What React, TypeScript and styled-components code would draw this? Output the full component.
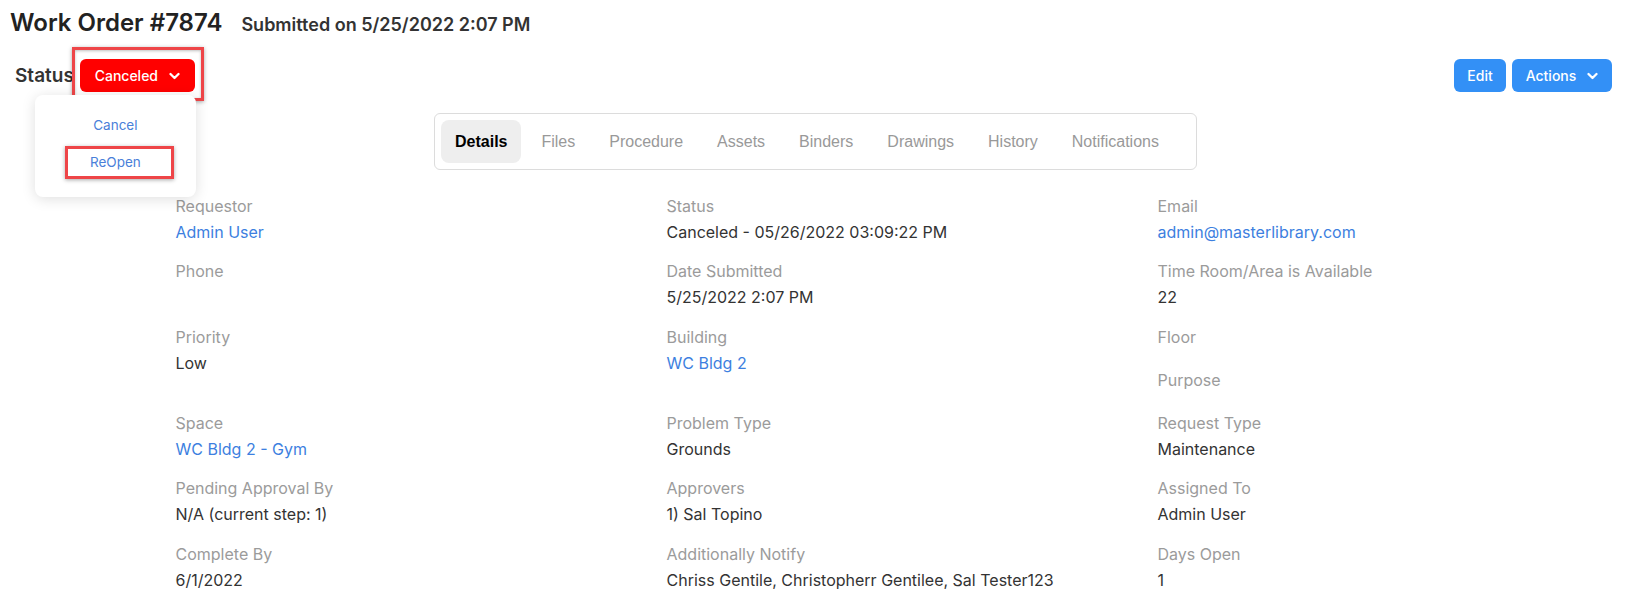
import React from "react";
import styled, { createGlobalStyle } from "styled-components";

const GlobalStyle = createGlobalStyle`
  body {
    margin: 0;
    background: #fff;
    font-family: Inter, "Noto Sans", sans-serif;
    color: #333;
  }
`;

const Page = styled.div`
  padding: 8px 14px 0 10px;
  height: 610px;
  box-sizing: border-box;
  overflow: hidden;
`;

const Header = styled.div`
  display: flex;
  align-items: baseline;
  gap: 19px;
  height: 30px;
  line-height: 30px;
`;

const Title = styled.h1`
  margin: 0;
  font-size: 24px;
  font-weight: 600;
  color: #222;
`;

const Submitted = styled.span`
  font-size: 18px;
  font-weight: 600;
  color: #333;
`;

const Toolbar = styled.div`
  display: flex;
  justify-content: space-between;
  align-items: center;
  margin-top: 21px;
  padding-left: 5px;
`;

const StatusGroup = styled.div`
  display: flex;
  align-items: center;
  gap: 6px;
`;

const StatusLabel = styled.span`
  font-size: 19px;
  font-weight: 600;
  color: #333;
`;

const DropdownWrap = styled.div`
  position: relative;
`;

const Button = styled.button<{ $tone: "red" | "blue" }>`
  display: inline-flex;
  align-items: center;
  justify-content: center;
  gap: 11px;
  height: 33px;
  padding: 0 14px;
  border: none;
  border-radius: 6px;
  font-family: Inter, "Noto Sans", sans-serif;
  font-size: 14px;
  font-weight: 500;
  color: #fff;
  background: ${(p) => (p.$tone === "red" ? "#ff0000" : "#3390f6")};
  cursor: pointer;
`;

const StatusButton = styled(Button)`
  position: relative;
  width: 115px;

  &::after {
    content: "";
    position: absolute;
    inset: -12px -9px -9px -8px;
    border: 3px solid #ee4548;
    box-shadow: 0 1px 4px rgba(0, 0, 0, 0.35), inset 0 1px 3px rgba(0, 0, 0, 0.25);
    pointer-events: none;
  }
`;

const Menu = styled.div`
  position: absolute;
  top: 36px;
  left: -45px;
  width: 161px;
  padding: 12px 0 16px;
  background: #fff;
  border-radius: 8px;
  box-shadow: 0 2px 14px rgba(0, 0, 0, 0.13);
  z-index: 2;
`;

const MenuItem = styled.div<{ $marked?: boolean }>`
  position: relative;
  height: 37px;
  line-height: 37px;
  text-align: center;
  font-size: 13.5px;
  color: #4a80d9;

  ${(p) =>
    p.$marked &&
    `
    &::after {
      content: "";
      position: absolute;
      inset: 2px 22px 2px 30px;
      border: 3px solid #ee4548;
      box-shadow: 0 1px 4px rgba(0, 0, 0, 0.35);
      pointer-events: none;
    }
  `}
`;

const Actions = styled.div`
  display: flex;
  gap: 6px;
`;

const EditButton = styled(Button)`
  width: 52px;
  padding: 0;
`;

const ActionsButton = styled(Button)`
  width: 100px;
  padding: 0;
`;

const Tabs = styled.div`
  display: inline-flex;
  gap: 6px;
  margin: 21px 0 0 424px;
  padding: 6px 23px 6px 6px;
  border: 1px solid #dcdcdc;
  border-radius: 6px;
`;

const Tab = styled.div<{ $active?: boolean }>`
  height: 43px;
  line-height: 43px;
  padding: 0 14px;
  border-radius: 8px;
  font-family: "Liberation Sans", Arial, sans-serif;
  font-size: 16px;
  font-weight: ${(p) => (p.$active ? 700 : 400)};
  color: ${(p) => (p.$active ? "#000" : "#999")};
  background: ${(p) => (p.$active ? "#eeeeee" : "transparent")};
`;

const Details = styled.div`
  display: grid;
  grid-template-columns: repeat(3, 491px);
  margin-top: 23.5px;
  padding-left: 165.5px;
`;

const Cell = styled.div`
  display: flex;
  flex-direction: column;
`;

const Field = styled.div`
  padding-bottom: 15.5px;
`;

const Label = styled.div`
  font-size: 16px;
  line-height: 24px;
  color: #9b9b9b;
`;

const Value = styled.div<{ $link?: boolean }>`
  margin-top: 2px;
  font-size: 16px;
  line-height: 24px;
  color: ${(p) => (p.$link ? "#3d7fe0" : "#333")};
  &:empty {
    height: 0;
    margin-top: 3.5px;
  }
`;

const Chevron = () => (
  <svg width="11" height="8" viewBox="0 0 11 8" fill="none">
    <path d="M1.5 2 L5.5 6 L9.5 2" stroke="#fff" strokeWidth="2.3" strokeLinecap="round" strokeLinejoin="round" />
  </svg>
);

type Item = { label: string; value?: string; link?: boolean };

const cells: Item[][] = [
  [{ label: "Requestor", value: "Admin User", link: true }],
  [{ label: "Status", value: "Canceled - 05/26/2022 03:09:22 PM" }],
  [{ label: "Email", value: "admin@masterlibrary.com", link: true }],
  [{ label: "Phone", value: "" }],
  [{ label: "Date Submitted", value: "5/25/2022 2:07 PM" }],
  [{ label: "Time Room/Area is Available", value: "22" }],
  [{ label: "Priority", value: "Low" }],
  [{ label: "Building", value: "WC Bldg 2", link: true }],
  [{ label: "Floor", value: "" }, { label: "Purpose", value: "" }],
  [{ label: "Space", value: "WC Bldg 2 - Gym", link: true }],
  [{ label: "Problem Type", value: "Grounds" }],
  [{ label: "Request Type", value: "Maintenance" }],
  [{ label: "Pending Approval By", value: "N/A (current step: 1)" }],
  [{ label: "Approvers", value: "1) Sal Topino" }],
  [{ label: "Assigned To", value: "Admin User" }],
  [{ label: "Complete By", value: "6/1/2022" }],
  [{ label: "Additionally Notify", value: "Chriss Gentile, Christopherr Gentilee, Sal Tester123" }],
  [{ label: "Days Open", value: "1" }],
];

const tabs = ["Details", "Files", "Procedure", "Assets", "Binders", "Drawings", "History", "Notifications"];

export default function App() {
  return (
    <>
      <GlobalStyle />
      <Page>
        <Header>
          <Title>Work Order #7874</Title>
          <Submitted>Submitted on 5/25/2022 2:07 PM</Submitted>
        </Header>

        <Toolbar>
          <StatusGroup>
            <StatusLabel>Status</StatusLabel>
            <DropdownWrap>
              <StatusButton $tone="red">
                Canceled <Chevron />
              </StatusButton>
              <Menu>
                <MenuItem>Cancel</MenuItem>
                <MenuItem $marked>ReOpen</MenuItem>
              </Menu>
            </DropdownWrap>
          </StatusGroup>
          <Actions>
            <EditButton $tone="blue">Edit</EditButton>
            <ActionsButton $tone="blue">
              Actions <Chevron />
            </ActionsButton>
          </Actions>
        </Toolbar>

        <Tabs>
          {tabs.map((t, i) => (
            <Tab key={t} $active={i === 0}>
              {t}
            </Tab>
          ))}
        </Tabs>

        <Details>
          {cells.map((cell, i) => (
            <Cell key={i}>
              {cell.map((f) => (
                <Field key={f.label}>
                  <Label>{f.label}</Label>
                  <Value $link={f.link}>{f.value}</Value>
                </Field>
              ))}
            </Cell>
          ))}
        </Details>
      </Page>
    </>
  );
}
